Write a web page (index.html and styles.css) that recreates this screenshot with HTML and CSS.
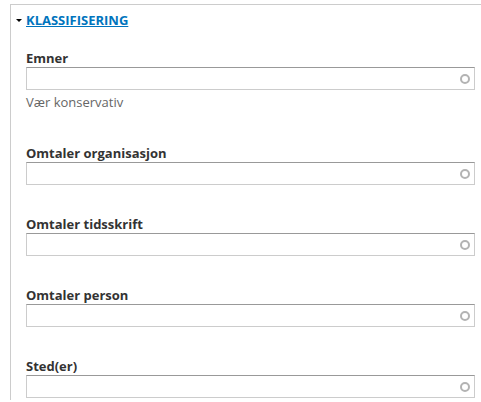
FILE: index.html
```html
<!DOCTYPE html>
<html lang="no">
<head>
<meta charset="utf-8">
<link rel="stylesheet" href="styles.css">
</head>
<body>
<div class="panel">
  <div class="legend">
    <span class="arrow"></span>
    <a class="legend-link" href="#">KLASSIFISERING</a>
  </div>
  <div class="fields">
    <div class="field">
      <label class="label">Emner</label>
      <div class="input"><span class="throbber"></span></div>
      <div class="desc">Vær konservativ</div>
    </div>
    <div class="field">
      <label class="label">Omtaler organisasjon</label>
      <div class="input"><span class="throbber"></span></div>
    </div>
    <div class="field">
      <label class="label">Omtaler tidsskrift</label>
      <div class="input"><span class="throbber"></span></div>
    </div>
    <div class="field">
      <label class="label">Omtaler person</label>
      <div class="input"><span class="throbber"></span></div>
    </div>
    <div class="field">
      <label class="label">Sted(er)</label>
      <div class="input"><span class="throbber"></span></div>
    </div>
  </div>
</div>
</body>
</html>
```
FILE: styles.css
```css
html, body {
  margin: 0;
  padding: 0;
  background: #fff;
  height: 100%;
  overflow: hidden;
}
body {
  font-family: "Open Sans", "DejaVu Sans", sans-serif;
  color: #333;
}
.panel {
  margin: 4px 0 0 10px;
  border-top: 1px solid #ccc;
  border-left: 1px solid #ccc;
  padding: 6px 6px 0 15px;
  height: 396px;
  box-sizing: border-box;
}
.legend {
  display: flex;
  align-items: center;
  gap: 4px;
  margin-left: -10px;
  height: 18px;
}
.arrow {
  width: 0;
  height: 0;
  border-left: 3px solid transparent;
  border-right: 3px solid transparent;
  border-top: 3px solid #000;
  margin-top: 1px;
}
.legend-link {
  font-size: 13px;
  font-weight: 700;
  color: #0074bd;
  text-decoration: underline;
  line-height: 18px;
}
.fields {
  display: flex;
  flex-direction: column;
  gap: 30px;
  padding-top: 20px;
}
.label {
  display: block;
  font-size: 13px;
  font-weight: 700;
  line-height: 18px;
  color: #333;
}
.input {
  height: 23px;
  box-sizing: border-box;
  border: 1px solid #ccc;
  border-top-color: #999;
  display: flex;
  align-items: center;
  justify-content: flex-end;
  padding-right: 4px;
}
.throbber {
  width: 10px;
  height: 10px;
  box-sizing: border-box;
  border: 2px solid #b3b3b3;
  border-radius: 50%;
}
.desc {
  font-size: 13px;
  line-height: 16px;
  color: #666;
  margin-top: 4px;
  margin-bottom: 4px;
}
```
